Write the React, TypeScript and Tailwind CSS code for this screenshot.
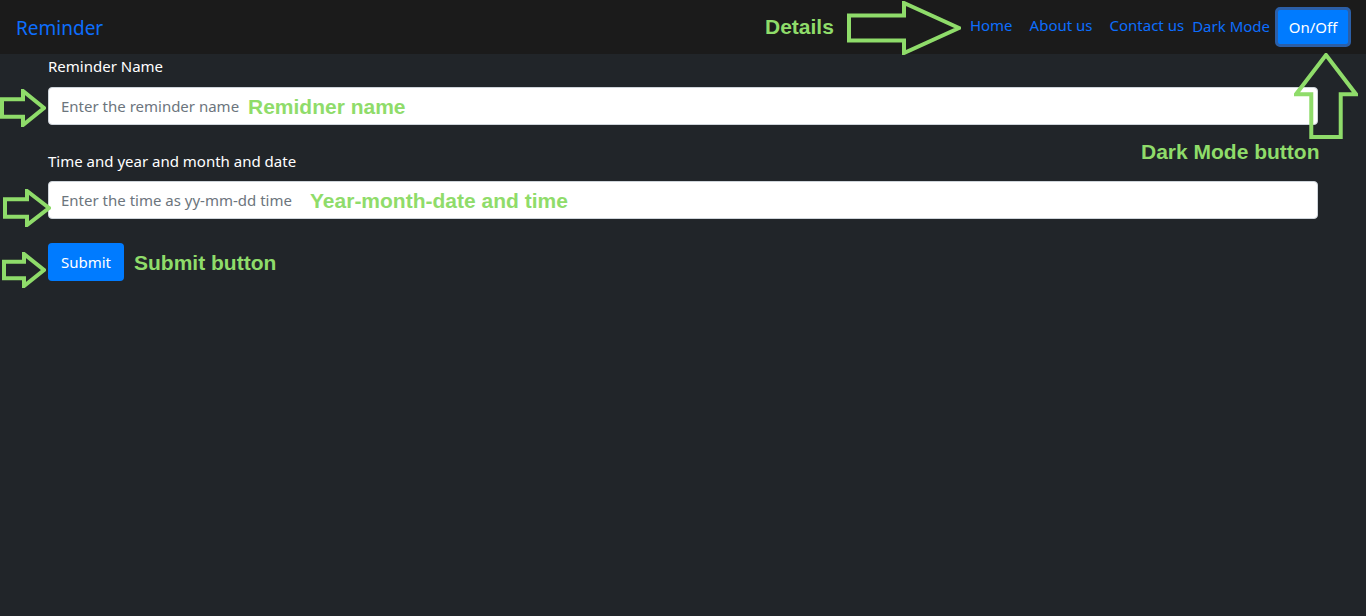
import React from "react";

const green = "#8fdc6a";

function RightArrow({ w, h, className }: { w: number; h: number; className: string }) {
  // outline arrow pointing right
  const s1 = h * 0.27;
  const s2 = h * 0.73;
  const hx = w * 0.5;
  return (
    <svg width={w} height={h} className={className} viewBox={`0 0 ${w} ${h}`}>
      <polygon
        points={`2,${s1} ${hx},${s1} ${hx},2 ${w - 2},${h / 2} ${hx},${h - 2} ${hx},${s2} 2,${s2}`}
        fill="none"
        stroke={green}
        strokeWidth={4}
        strokeLinejoin="miter"
      />
    </svg>
  );
}

function UpArrow({ w, h, className }: { w: number; h: number; className: string }) {
  const s1 = w * 0.27;
  const s2 = w * 0.73;
  const hy = h * 0.48;
  return (
    <svg width={w} height={h} className={className} viewBox={`0 0 ${w} ${h}`}>
      <polygon
        points={`${w / 2},2 ${w - 2},${hy} ${s2},${hy} ${s2},${h - 2} ${s1},${h - 2} ${s1},${hy} 2,${hy}`}
        fill="none"
        stroke={green}
        strokeWidth={4}
      />
    </svg>
  );
}

const note = "absolute font-bold text-[21px] text-[#8fdc6a] font-['Liberation_Sans',Arial,sans-serif] leading-none";

export default function App() {
  return (
    <div className="relative min-h-[616px] bg-[#212529] font-['Noto_Sans','Open_Sans',sans-serif] overflow-hidden">
      <nav className="flex h-[54px] items-center bg-[#1b1b1b] pl-4 pr-[15px]">
        <span className="mt-0.5 text-[19px] text-[#0d6efd]">Reminder</span>
        <div className="ml-auto flex items-center text-[15px] text-[#0d6efd]">
          <span className="-mt-1">Home</span>
          <span className="-mt-1 ml-[17px]">About us</span>
          <span className="-mt-1 ml-[17px]">Contact us</span>
          <span className="-mt-0.5 ml-[8px]">Dark Mode</span>
          <button className="ml-[5px] h-[40px] w-[76px] rounded-[5px] border-[3px] border-[#2b5fa8] bg-[#007bff] text-[15px] text-white">
            On/Off
          </button>
        </div>
      </nav>

      <form className="px-12 pt-[1px]" onSubmit={(e) => e.preventDefault()}>
        <label className="block text-[15px] leading-[22px] text-white">Reminder Name</label>
        <input
          className="mt-[10px] block h-[38px] w-full rounded-[4px] border border-[#ced4da] bg-white px-3 text-[15px] text-[#495057] placeholder:text-[#6c757d]"
          placeholder="Enter the reminder name"
        />
        <label className="mt-[25px] block text-[15px] leading-[22px] text-white">
          Time and year and month and date
        </label>
        <input
          className="mt-[9px] block h-[38px] w-full rounded-[4px] border border-[#ced4da] bg-white px-3 text-[15px] text-[#495057] placeholder:text-[#6c757d]"
          placeholder="Enter the time as yy-mm-dd time"
        />
        <button className="mt-[24px] h-[38px] w-[76px] rounded-[4px] bg-[#007bff] text-[15px] text-white">
          Submit
        </button>
      </form>

      {/* annotations */}
      <span className={`${note} left-[765px] top-[16px]`}>Details</span>
      <RightArrow w={114} h={54} className="absolute left-[847px] top-[1px]" />
      <UpArrow w={64} h={86} className="absolute left-[1294px] top-[53px]" />
      <span className={`${note} left-[1141px] top-[141px]`}>Dark Mode button</span>

      <RightArrow w={46} h={38} className="absolute left-0 top-[89px]" />
      <span className={`${note} left-[248px] top-[96px]`}>Remidner name</span>

      <RightArrow w={48} h={38} className="absolute left-[3px] top-[189px]" />
      <span className={`${note} left-[310px] top-[190px]`}>Year-month-date and time</span>

      <RightArrow w={44} h={36} className="absolute left-[2px] top-[252px]" />
      <span className={`${note} left-[134px] top-[252px]`}>Submit button</span>
    </div>
  );
}
